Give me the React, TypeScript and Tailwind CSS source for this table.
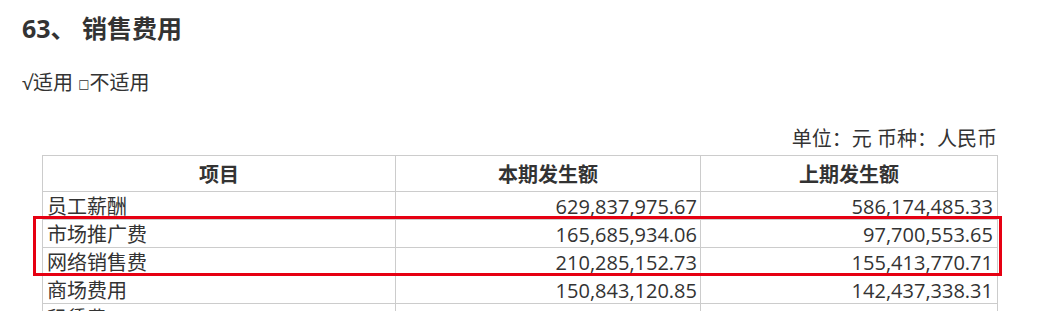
import React from "react";

const rows: [string, string, string][] = [
  ["员工薪酬", "629,837,975.67", "586,174,485.33"],
  ["市场推广费", "165,685,934.06", "97,700,553.65"],
  ["网络销售费", "210,285,152.73", "155,413,770.71"],
  ["商场费用", "150,843,120.85", "142,437,338.31"],
  ["租赁费", "109,904,574.90", "170,600,800.74"],
];

export default function App() {
  const font = { fontFamily: '"Open Sans", "Noto Sans CJK SC", sans-serif' };
  return (
    <div className="w-[1038px] h-[311px] overflow-hidden bg-white text-[#333]" style={font}>
      <div className="pl-[22px] pt-[12px]">
        <h1 className="text-[25px] leading-[32px] font-bold">63、 销售费用</h1>
        <p className="mt-[25px] text-[20px] leading-[28px]">
          √适用 <span className="text-[12px] align-[2px]" style={{ fontFamily: '"DejaVu Sans", sans-serif' }}>□</span>不适用
        </p>
        <div className="ml-[20px] w-[956px]">
          <div className="mt-[27px] text-right pr-[1px] text-[20px] leading-[28px]">单位：元 币种：人民币</div>
          <div className="relative mt-[2px]">
            <div className="grid grid-cols-[353px_305px_297px] border-r border-[#cccccc] text-[20px]">
              <div className="h-[36px] border-l border-t border-[#cccccc] flex items-center justify-center pt-[3px] font-bold">项目</div>
              <div className="h-[36px] border-l border-t border-[#cccccc] flex items-center justify-center pt-[3px] font-bold">本期发生额</div>
              <div className="h-[36px] border-l border-t border-[#cccccc] flex items-center justify-center pt-[3px] font-bold">上期发生额</div>
              {rows.map(([name, a, b]) => (
                <React.Fragment key={name}>
                  <div className="h-[28px] border-l border-t border-[#cccccc] flex items-center pl-[4px] pt-[2px] whitespace-nowrap">{name}</div>
                  <div className="h-[28px] border-l border-t border-[#cccccc] flex items-center justify-end pr-[3px] pt-[2px] whitespace-nowrap">{a}</div>
                  <div className="h-[28px] border-l border-t border-[#cccccc] flex items-center justify-end pr-[4px] pt-[2px] whitespace-nowrap">{b}</div>
                </React.Fragment>
              ))}
            </div>
            <div className="absolute left-[-9px] top-[61px] w-[969px] h-[60px] border-[3px] border-[#e60012] pointer-events-none" />
          </div>
        </div>
      </div>
    </div>
  );
}
